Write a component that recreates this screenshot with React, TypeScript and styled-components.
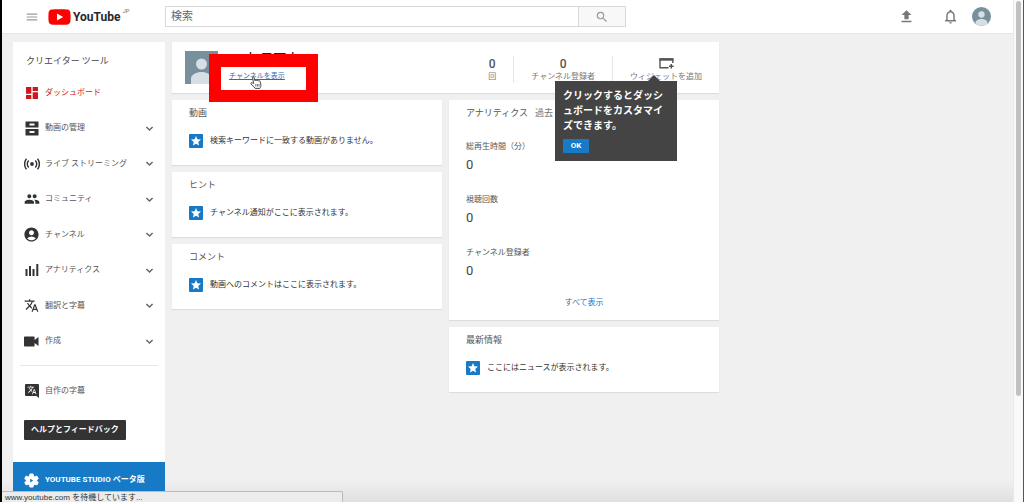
import React from 'react';
import styled, { createGlobalStyle, css } from 'styled-components';
import {
  MdAccountCircle,
  MdDashboard,
  MdFileUpload,
  MdMenu,
  MdNotificationsNone,
  MdPeople,
  MdSearch,
  MdStar,
  MdTranslate,
} from 'react-icons/md';

const GlobalStyle = createGlobalStyle`
  *, *::before, *::after { box-sizing: border-box; }
  body {
    margin: 0;
    background: #f0f0f0;
    color: #444;
    font-family: Roboto, "Noto Sans CJK JP", sans-serif;
    font-size: 8px;
    line-height: 12px;
  }
  h1, h2, p, ul, dl, dd { margin: 0; padding: 0; }
  ul { list-style: none; }
  a { color: inherit; text-decoration: none; }
  button, input { font: inherit; color: inherit; margin: 0; }
  button { cursor: pointer; }
  svg { display: block; flex: none; }
`;

const Window = styled.div`
  display: flex;
  height: 100vh;
  overflow: hidden;
  border-left: 2px solid #000;
  border-right: 1px solid #555;
`;

const Page = styled.div`
  flex: 1;
  min-width: 0;
  display: flex;
  flex-direction: column;
  background: linear-gradient(to top, #e0e0e0, #f0f0f0 22px);
`;

const ScrollTrack = styled.div`
  flex: none;
  width: 10px;
  padding: 1px 2px;
  background: #fafafa;
  border-left: 1px solid #e9e9e9;
`;

const ScrollThumb = styled.div`
  height: 79%;
  border-radius: 3px;
  background: #c1c1c1;
`;

const Masthead = styled.header`
  flex: none;
  display: flex;
  align-items: center;
  height: 34px;
  padding-right: 22px;
  background: #fff;
  border-bottom: 1px solid #e6e6e6;
`;

const Brand = styled.div`
  flex: none;
  display: flex;
  align-items: center;
  width: 163px;
  padding-left: 23px;
  gap: 9px;
`;

const IconButton = styled.button`
  display: flex;
  padding: 0;
  border: 0;
  background: none;
  color: ${(p) => p.color || '#777'};
`;

const LogoLink = styled.a`
  display: flex;
  align-items: center;
  gap: 2px;
  color: #282828;
`;

const LogoName = styled.span`
  font-size: 12px;
  font-weight: 700;
  line-height: 18px;
`;

const LogoRegion = styled.span`
  align-self: flex-start;
  font-size: 6px;
  line-height: 6px;
  color: #777;
`;

const SearchForm = styled.form`
  flex: 0 1 461px;
  display: flex;
  height: 21px;
`;

const SearchInput = styled.input`
  flex: 1;
  min-width: 0;
  padding: 0 5px;
  border: 1px solid #d8d8d8;
  border-right: 0;
  background: #fff;
  font-size: 11px;
  &::placeholder { color: #666; opacity: 1; }
`;

const SearchButton = styled.button`
  flex: none;
  display: flex;
  align-items: center;
  justify-content: center;
  width: 48px;
  padding: 0;
  border: 1px solid #d8d8d8;
  background: #f8f8f8;
  color: #999;
`;

const Actions = styled.div`
  display: flex;
  align-items: center;
  margin-left: auto;
  gap: 27px;
`;

const AccountGroup = styled.div`
  display: flex;
  align-items: center;
  gap: 13px;
`;

const Body = styled.div`
  flex: 1;
  display: flex;
  align-items: flex-start;
  gap: 7px;
  padding: 8px 11px 0;
`;

const Sidebar = styled.nav`
  flex: none;
  width: 152px;
  background: #fff;
`;

const SidebarTitle = styled.h1`
  padding: 13px 13px 7px;
  font-size: 9px;
  font-weight: 400;
  line-height: 13px;
  color: #444;
`;

const NavList = styled.ul`
  display: grid;
  grid-auto-rows: 35px 36px;
`;

const navRow = css`
  display: flex;
  align-items: center;
  gap: 5px;
  height: 100%;
  padding: 0 10px;
  color: #333;
`;

const NavLink = styled.a<{ $active?: boolean }>`
  ${navRow}
  ${(p) => p.$active && 'color: #cc181e;'}
`;

const NavIcon = styled.span`
  flex: none;
  display: flex;
  justify-content: center;
  width: 17px;
`;

const NavText = styled.span<{ $active?: boolean }>`
  flex: 1;
  color: ${(p) => (p.$active ? '#cc181e' : '#555')};
`;

const Divider = styled.hr`
  margin: 6px 7px 8px;
  border: 0;
  border-top: 1px solid #e6e6e6;
`;

const CaptionsLink = styled.a`
  ${navRow}
  height: 34px;
`;

const HelpButton = styled.button`
  display: block;
  height: 20px;
  margin: 12px 11px 22px;
  padding: 0 7px;
  border: 0;
  border-radius: 1px;
  background: #333;
  color: #fff;
  font-weight: 700;
`;

const StudioLink = styled.a`
  ${navRow}
  height: 40px;
  padding-bottom: 4px;
  background: #167ac6;
  color: #fff;
  font-weight: 700;
`;

const Main = styled.main`
  flex: 0 1 547px;
  min-width: 0;
  display: flex;
  flex-direction: column;
  gap: 7px;
`;

const Card = styled.section`
  background: #fff;
  box-shadow: 0 1px 1px rgba(0, 0, 0, 0.08);
`;

const ChannelCard = styled(Card)`
  position: relative;
  z-index: 1;
  display: flex;
  justify-content: space-between;
  height: 51px;
`;

const ChannelInfo = styled.div`
  position: relative;
  display: flex;
  gap: 11px;
  padding: 9px 13px;
`;

const ChannelName = styled.h2`
  margin-bottom: 4px;
  padding-left: 2px;
  font-size: 13px;
  font-weight: 500;
  line-height: 15px;
  color: #222;
`;

const ChannelLink = styled.a`
  display: block;
  font-size: 7px;
  color: #2a6cb8;
  text-decoration: underline;
`;

const Highlight = styled.div`
  position: absolute;
  top: 12px;
  left: 37px;
  width: 109px;
  height: 48px;
  border: 12px solid #f00;
  border-top-width: 13px;
`;

const Pointer = styled.svg`
  position: absolute;
  top: 34px;
  left: 78px;
`;

const Stats = styled.div`
  display: flex;
  padding: 14px 0 10px;
`;

const Stat = styled.div`
  position: relative;
  display: flex;
  flex-direction: column;
  align-items: center;
  padding: 0 17px;
  color: #777;
  white-space: nowrap;
  & + & { border-left: 1px solid #e6e6e6; }
`;

const StatValue = styled.strong`
  flex: none;
  display: flex;
  align-items: center;
  height: 15px;
  font-size: 12px;
  font-weight: 500;
  color: #555;
`;

const Tooltip = styled.div`
  position: absolute;
  top: 25px;
  right: 42px;
  width: 122px;
  padding: 7px 8px 8px;
  background: #444;
  color: #fff;
  font-size: 10px;
  font-weight: 700;
  line-height: 15px;
  white-space: normal;
  &::before {
    content: '';
    position: absolute;
    top: -6px;
    right: 17px;
    border: 6px solid transparent;
    border-top: 0;
    border-bottom-color: #444;
  }
`;

const OkButton = styled.button`
  display: block;
  width: 26px;
  height: 14px;
  margin-top: 6px;
  padding: 0;
  border: 0;
  border-radius: 1px;
  background: #167ac6;
  color: #fff;
  font-size: 8px;
  line-height: 14px;
`;

const Columns = styled.div`
  display: grid;
  grid-template-columns: 1fr 1fr;
  align-items: start;
  gap: 7px;
`;

const Column = styled.div`
  display: flex;
  flex-direction: column;
  gap: 7px;
`;

const NoticeCard = styled(Card)`
  display: flex;
  flex-direction: column;
  gap: 14px;
  padding: 7px 17px 17px;
`;

const CardTitle = styled.h2`
  display: flex;
  gap: 7px;
  font-size: 9px;
  font-weight: 400;
  line-height: 13px;
  color: #555;
`;

const Period = styled.span`
  color: #777;
`;

const Notice = styled.p`
  display: flex;
  align-items: center;
  gap: 7px;
  height: 14px;
  color: #333;
`;

const StarBadge = styled.span`
  flex: none;
  display: flex;
  align-items: center;
  justify-content: center;
  width: 14px;
  height: 14px;
  border-radius: 1px;
  background: #167ac6;
  color: #fff;
`;

const AnalyticsCard = styled(Card)`
  padding: 7px 17px 11px;
`;

const Metrics = styled.dl`
  display: grid;
  gap: 21px;
  margin: 21px 0 18px;
`;

const MetricLabel = styled.dt`
  color: #555;
`;

const MetricValue = styled.dd`
  padding-top: 4px;
  font-size: 13px;
  line-height: 16px;
  color: #444;
`;

const ShowAll = styled.a`
  display: block;
  text-align: center;
  color: #167ac6;
`;

const StatusBar = styled.div`
  position: fixed;
  left: 2px;
  bottom: 0;
  width: 341px;
  height: 11px;
  padding-left: 3px;
  border: 1px solid #bbb;
  border-width: 1px 1px 0 0;
  border-radius: 0 2px 0 0;
  background: #ececec;
  color: #333;
  font-family: "Liberation Sans", "Noto Sans CJK JP", sans-serif;
  line-height: 11px;
  z-index: 2;
`;

const LogoMark = () => (
  <svg width="23" height="16" viewBox="0 0 23 16" aria-hidden="true">
    <path
      fill="#f00"
      d="M3.4.5C6 .1 17 .1 19.6.5c1.5.3 2.4 1.2 2.7 2.7.4 2.4.4 7.2 0 9.600-.3 1.5-1.2 2.400-2.7 2.7-2.6.4-13.6.4-16.2 0C1.9 15.2 1 14.3.7 12.8c-.4-2.4-.4-7.2 0-9.600C1 1.7 1.9.8 3.4.5z"
    />
    <path fill="#fff" d="M9 4.600 15.200 8 9 11.400z" />
  </svg>
);

const ChevronIcon = () => (
  <svg
    width="11"
    height="11"
    viewBox="0 0 11 11"
    fill="none"
    stroke="#666"
    strokeWidth="1.500"
    aria-hidden="true"
  >
    <path d="M2.400 4 5.500 7l3.100-3" />
  </svg>
);

const DrawersIcon = () => (
  <svg width="14" height="15" viewBox="0 0 14 15" fill="currentColor" aria-hidden="true">
    <path
      fillRule="evenodd"
      d="M1 .5h12a.5.500 0 0 1 .5.500v5.500H.5V1a.5.500 0 0 1 .5-.5zM4.500 2.500v2h5v-2zM.5 8h13v6a.5.500 0 0 1-.5.500H1a.5.500 0 0 1-.5-.5zm4 2v2h5v-2z"
    />
  </svg>
);

const LiveIcon = () => (
  <svg
    width="16"
    height="12"
    viewBox="0 0 16 12"
    fill="none"
    stroke="currentColor"
    strokeWidth="1.400"
    aria-hidden="true"
  >
    <circle cx="8" cy="6" r="1.900" fill="currentColor" stroke="none" />
    <path d="M4.700 2.500a5.500 5.500 0 0 0 0 7M11.300 2.500a5.500 5.500 0 0 1 0 7M2.500 .8a8 8 0 0 0 0 10.400M13.500 .8a8 8 0 0 1 0 10.400" />
  </svg>
);

const BarsIcon = () => (
  <svg width="14" height="12" viewBox="0 0 14 12" fill="currentColor" aria-hidden="true">
    <path d="M.5 5h2v7h-2zM4 2h2v10H4zM7.500 5h2v7h-2zM11.300 0h2v12h-2z" />
  </svg>
);

const CameraIcon = () => (
  <svg width="15" height="11" viewBox="0 0 15 11" fill="currentColor" aria-hidden="true">
    <path d="M.8.500h9a.8.800 0 0 1 .8.800v2.800L14.500 1v9l-3.900-3.100v2.800a.8.800 0 0 1-.8.800h-9A.8.800 0 0 1 0 9.700V1.300A.8.800 0 0 1 .8.500z" />
  </svg>
);

const CaptionsIcon = () => (
  <svg width="14" height="14" viewBox="0 0 28 28" fill="currentColor" aria-hidden="true">
    <path d="M2 0h24a2 2 0 0 1 2 2v26l-5-4H2a2 2 0 0 1-2-2V2a2 2 0 0 1 2-2z" />
    <g fill="#fff" transform="translate(4 2) scale(.83)">
      <path d="M12.870 15.070l-2.540-2.510.030-.030A17.520 17.520 0 0 0 14.070 6H17V4h-7V2H8v2H1v1.990h11.170C11.500 7.920 10.440 9.750 9 11.350 8.070 10.320 7.300 9.190 6.690 8h-2c.73 1.630 1.730 3.170 2.980 4.560l-5.090 5.020L4 19l5-5 3.110 3.110.76-2.040zM18.500 10h-2L12 22h2l1.120-3h4.750L21 22h2l-4.500-12zm-2.620 7l1.620-4.330L19.120 17h-3.240z" />
    </g>
  </svg>
);

const StudioIcon = () => (
  <svg width="15" height="15" viewBox="0 0 24 24" aria-hidden="true">
    <path
      fill="currentColor"
      stroke="currentColor"
      strokeWidth="1.500"
      strokeLinejoin="round"
      d="M9.500 1.500h5l.7 3.500 2.200 1.200 3.200-1.400 2.300 4.200L20.300 11v2l2.600 2-2.300 4.200-3.200-1.400-2.200 1.200-.7 3.500h-5L8.800 19l-2.200-1.200-3.200 1.400L1.100 15l2.600-2v-2L1.100 9l2.300-4.200 3.200 1.400L8.800 5z"
    />
    <path fill="#167ac6" d="M9.800 9 14.800 12l-5 3z" />
  </svg>
);

const WidgetIcon = () => (
  <svg width="15" height="11" viewBox="0 0 15 11" fill="none" stroke="currentColor" aria-hidden="true">
    <path strokeWidth="1.400" d="M9.500 9.800H1V1h12.800v4" />
    <path strokeWidth="2.400" d="M.400 1.500h14" />
    <path strokeWidth="1.500" d="M12.300 6v4.600M10 8.300h4.600" />
  </svg>
);

const Avatar = ({ size, round }: { size: number; round?: boolean }) => (
  <svg width={size} height={size} viewBox="0 0 33 33" role="img" aria-label="プロフィール画像">
    <clipPath id={round ? 'avatar-round' : 'avatar-square'}>
      {round ? <circle cx="16.500" cy="16.500" r="16.500" /> : <rect width="33" height="33" />}
    </clipPath>
    <g clipPath={`url(#${round ? 'avatar-round' : 'avatar-square'})`}>
      <rect width="33" height="33" fill="#78909c" />
      <circle cx="16.500" cy="13" r="5.500" fill="#d6dfe3" />
      <path fill="#d6dfe3" d="M6 33v-5.500c0-4 6-6.500 10.500-6.500S27 23.500 27 27.500V33z" />
    </g>
  </svg>
);

const NAV_ITEMS = [
  { label: 'ダッシュボード', icon: <MdDashboard size={16} />, active: true },
  { label: '動画の管理', icon: <DrawersIcon /> },
  { label: 'ライブ ストリーミング', icon: <LiveIcon /> },
  { label: 'コミュニティ', icon: <MdPeople size={16} /> },
  { label: 'チャンネル', icon: <MdAccountCircle size={17} /> },
  { label: 'アナリティクス', icon: <BarsIcon /> },
  { label: '翻訳と字幕', icon: <MdTranslate size={15} /> },
  { label: '作成', icon: <CameraIcon /> },
];

const METRICS = [
  { label: '総再生時間（分）', value: 0 },
  { label: '視聴回数', value: 0 },
  { label: 'チャンネル登録者', value: 0 },
];

const NoticePanel = ({ title, children }: { title: string; children: React.ReactNode }) => (
  <NoticeCard>
    <CardTitle>{title}</CardTitle>
    <Notice>
      <StarBadge>
        <MdStar size={12} />
      </StarBadge>
      {children}
    </Notice>
  </NoticeCard>
);

export default function App() {
  return (
    <>
      <GlobalStyle />
      <Window>
        <Page>
          <Masthead>
            <Brand>
              <IconButton type="button" color="#999" aria-label="メニュー">
                <MdMenu size={14} />
              </IconButton>
              <LogoLink href="#home">
                <LogoMark />
                <LogoName>YouTube</LogoName>
                <LogoRegion>JP</LogoRegion>
              </LogoLink>
            </Brand>
            <SearchForm role="search">
              <SearchInput type="text" placeholder="検索" aria-label="検索" />
              <SearchButton type="submit" aria-label="検索する">
                <MdSearch size={14} />
              </SearchButton>
            </SearchForm>
            <Actions>
              <IconButton type="button" aria-label="アップロード">
                <MdFileUpload size={17} />
              </IconButton>
              <AccountGroup>
                <IconButton type="button" aria-label="通知">
                  <MdNotificationsNone size={17} />
                </IconButton>
                <IconButton type="button" aria-label="アカウント">
                  <Avatar size={19} round />
                </IconButton>
              </AccountGroup>
            </Actions>
          </Masthead>

          <Body>
            <Sidebar>
              <SidebarTitle>クリエイター ツール</SidebarTitle>
              <NavList>
                {NAV_ITEMS.map((item) => (
                  <li key={item.label}>
                    <NavLink href="#nav" $active={item.active}>
                      <NavIcon>{item.icon}</NavIcon>
                      <NavText $active={item.active}>{item.label}</NavText>
                      {!item.active && <ChevronIcon />}
                    </NavLink>
                  </li>
                ))}
              </NavList>
              <Divider />
              <CaptionsLink href="#captions">
                <NavIcon>
                  <CaptionsIcon />
                </NavIcon>
                <NavText>自作の字幕</NavText>
              </CaptionsLink>
              <HelpButton type="button">ヘルプとフィードバック</HelpButton>
              <StudioLink href="#studio">
                <NavIcon>
                  <StudioIcon />
                </NavIcon>
                YOUTUBE STUDIO ベータ版
              </StudioLink>
            </Sidebar>

            <Main>
              <ChannelCard>
                <ChannelInfo>
                  <Avatar size={33} />
                  <div>
                    <ChannelName>二本 早下本</ChannelName>
                    <ChannelLink href="#channel">チャンネルを表示</ChannelLink>
                  </div>
                  <Highlight />
                  <Pointer width="12" height="13" viewBox="0 0 12 13" aria-hidden="true">
                    <path
                      fill="#fff"
                      stroke="#333"
                      strokeWidth=".9"
                      strokeLinejoin="round"
                      d="M3.600 7.500 2.600 2c-.2-1.200 1.300-1.500 1.600-.4L5 4.800c.2-.9 1.400-.9 1.700 0 .3-.8 1.500-.7 1.700.2.500-.7 1.500-.4 1.700.4l.7 2.800c.3 1.600-.2 2.800-1 4.200H5.200C4.300 10.800 2.400 9.500 1.100 8.200.300 7.300 1.400 6.300 2.200 6.800z"
                    />
                    <path stroke="#333" strokeWidth=".7" d="M5.800 8v2.500M7.400 8v2.500M9 8v2.500" />
                  </Pointer>
                </ChannelInfo>
                <Stats>
                  <Stat>
                    <StatValue>0</StatValue>回
                  </Stat>
                  <Stat>
                    <StatValue>0</StatValue>チャンネル登録者
                  </Stat>
                  <Stat>
                    <StatValue>
                      <WidgetIcon />
                    </StatValue>
                    ウィジェットを追加
                    <Tooltip role="tooltip">
                      クリックするとダッシュボードをカスタマイズできます。
                      <OkButton type="button">OK</OkButton>
                    </Tooltip>
                  </Stat>
                </Stats>
              </ChannelCard>

              <Columns>
                <Column>
                  <NoticePanel title="動画">検索キーワードに一致する動画がありません。</NoticePanel>
                  <NoticePanel title="ヒント">チャンネル通知がここに表示されます。</NoticePanel>
                  <NoticePanel title="コメント">動画へのコメントはここに表示されます。</NoticePanel>
                </Column>
                <Column>
                  <AnalyticsCard>
                    <CardTitle>
                      アナリティクス <Period>過去</Period>
                    </CardTitle>
                    <Metrics>
                      {METRICS.map((metric) => (
                        <div key={metric.label}>
                          <MetricLabel>{metric.label}</MetricLabel>
                          <MetricValue>{metric.value}</MetricValue>
                        </div>
                      ))}
                    </Metrics>
                    <ShowAll href="#analytics">すべて表示</ShowAll>
                  </AnalyticsCard>
                  <NoticePanel title="最新情報">ここにはニュースが表示されます。</NoticePanel>
                </Column>
              </Columns>
            </Main>
          </Body>
        </Page>
        <ScrollTrack>
          <ScrollThumb />
        </ScrollTrack>
      </Window>
      <StatusBar role="status">www.youtube.com を待機しています...</StatusBar>
    </>
  );
}
